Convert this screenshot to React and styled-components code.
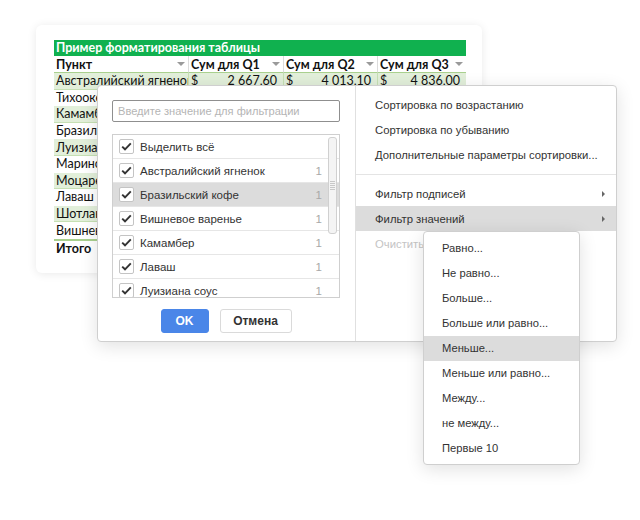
import React from 'react';
import styled, { createGlobalStyle } from 'styled-components';

const GlobalStyle = createGlobalStyle`
  html, body { margin: 0; padding: 0; background: #fff; }
  body { font-family: "Liberation Sans", Arial, sans-serif; }
`;

const Stage = styled.div`
  position: relative;
  width: 640px;
  height: 520px;
  overflow: hidden;
  background: #fff;
  padding-top: 25px;
  box-sizing: border-box;
`;

const SheetCard = styled.div`
  margin-left: 36px;
  width: 446px;
  height: 248px;
  box-sizing: border-box;
  padding: 15px 16px 0 18px;
  background: #fff;
  border-radius: 6px;
  box-shadow: 0 1px 10px rgba(0, 0, 0, 0.09);
`;

const Table = styled.div`
  display: grid;
  grid-template-columns: 134px 95px 94px 89px;
  width: 412px;
  font-family: Lato, "Liberation Sans", sans-serif;
  font-size: 12.5px;
  color: #111;
`;

const TitleCell = styled.div`
  grid-column: 1 / -1;
  height: 16px;
  line-height: 16px;
  padding-left: 2px;
  background: #10b14f;
  color: #fff;
  font-weight: 700;
`;

const HeadCell = styled.div`
  display: flex;
  align-items: center;
  justify-content: space-between;
  height: 16px;
  padding: 0 3px 0 2px;
  font-weight: 700;
  border-bottom: 1px solid #a9d08e;
  border-left: ${p => (p.$first ? 'none' : '1px solid #dcdcdc')};
  white-space: nowrap;
`;

const Arrow = styled.span`
  width: 0;
  height: 0;
  border-left: 4px solid transparent;
  border-right: 4px solid transparent;
  border-top: 4px solid #9a9a9a;
`;

const Cell = styled.div`
  display: flex;
  justify-content: space-between;
  align-items: center;
  height: ${p => (p.$total ? 18 : 16.6)}px;
  padding: 0 6px 0 2px;
  background: ${p => (p.$green ? '#e2efda' : '#fff')};
  border-bottom: 1px solid ${p => (p.$green ? '#c6e0b4' : '#fff')};
  border-left: ${p => (p.$first ? 'none' : '1px solid #c6e0b4')};
  border-top: ${p => (p.$total ? '2px solid #a9d08e' : 'none')};
  font-weight: ${p => (p.$total ? 700 : 400)};
  box-sizing: border-box;
  white-space: nowrap;
  overflow: hidden;
`;

const Dialog = styled.div`
  position: absolute;
  left: 97px;
  top: 85px;
  width: 520px;
  height: 257px;
  display: flex;
  background: #fff;
  border: 1px solid #cfcfcf;
  border-radius: 4px;
  box-shadow: 0 4px 18px rgba(0, 0, 0, 0.12);
  box-sizing: border-box;
  font-size: 11.3px;
  color: #333;
`;

const FilterPane = styled.div`
  flex: 0 0 258px;
  box-sizing: border-box;
  padding: 14px 15px 0 14px;
  border-right: 1px solid #e0e0e0;
  display: flex;
  flex-direction: column;
`;

const SearchInput = styled.input`
  height: 22px;
  box-sizing: border-box;
  border: 1px solid #8f8f8f;
  border-radius: 2px;
  padding: 0 5px;
  font-family: "Liberation Sans", Arial, sans-serif;
  font-size: 11.1px;
  color: #333;
  &::placeholder { color: #b5b5b5; }
`;

const ValueList = styled.div`
  position: relative;
  margin-top: 12px;
  height: 164px;
  border: 1px solid #cfcfcf;
  overflow: hidden;
  box-sizing: border-box;
`;

const ValueRow = styled.div`
  display: flex;
  align-items: center;
  height: 24px;
  box-sizing: border-box;
  padding: 0 17px 0 6px;
  border-bottom: 1px solid #e6e6e6;
  background: ${p => (p.$active ? '#dcdcdc' : '#fff')};
  font-size: 11.5px;
`;

const CheckBox = styled.span`
  display: flex;
  align-items: center;
  justify-content: center;
  width: 13px;
  height: 13px;
  border: 1px solid #c4c4c4;
  border-radius: 2px;
  background: #fff;
  margin-right: 6px;
`;

const Label = styled.span`
  flex: 1;
  white-space: nowrap;
`;

const Count = styled.span`
  color: #a8a8a8;
`;

const Scrollbar = styled.div`
  position: absolute;
  right: 2px;
  top: 2px;
  width: 7px;
  height: 95px;
  border: 1px solid #d0d0d0;
  border-radius: 3px;
  background: #f4f4f4;
  display: flex;
  align-items: center;
  justify-content: center;
`;

const Grip = styled.div`
  width: 5px;
  height: 9px;
  background: repeating-linear-gradient(#c8c8c8 0 1px, transparent 1px 2px);
`;

const ButtonRow = styled.div`
  display: flex;
  justify-content: center;
  gap: 11px;
  margin-top: 11px;
`;

const Button = styled.button`
  height: 24px;
  padding: 0;
  width: ${p => p.$w}px;
  border-radius: 3px;
  font-family: "Liberation Sans", Arial, sans-serif;
  font-size: 12px;
  font-weight: 700;
  border: 1px solid ${p => (p.$primary ? '#4a86e8' : '#dadada')};
  background: ${p => (p.$primary ? '#4a86e8' : '#fff')};
  color: ${p => (p.$primary ? '#fff' : '#333')};
`;

const MenuPane = styled.div`
  flex: 1;
  min-width: 0;
  padding-top: 6px;
`;

const MenuItem = styled.div`
  display: flex;
  align-items: center;
  justify-content: space-between;
  height: 25px;
  padding: 0 11px 0 19px;
  background: ${p => (p.$active ? '#dcdcdc' : 'transparent')};
  color: ${p => (p.$disabled ? '#c4c4c4' : '#333')};
  white-space: nowrap;
`;

const MenuSep = styled.div`
  height: 1px;
  background: #e4e4e4;
  margin: 7px 0 6px;
`;

const SubArrow = styled.span`
  width: 0;
  height: 0;
  border-top: 3px solid transparent;
  border-bottom: 3px solid transparent;
  border-left: 3px solid #666;
`;

const SubMenu = styled.div`
  position: absolute;
  left: 423px;
  top: 231px;
  width: 157px;
  height: 234px;
  box-sizing: border-box;
  padding-top: 4px;
  background: #fff;
  border: 1px solid #cfcfcf;
  border-radius: 4px;
  box-shadow: 0 4px 18px rgba(0, 0, 0, 0.12);
  font-size: 11.2px;
  color: #333;
`;

const SubItem = styled.div`
  height: 25px;
  line-height: 25px;
  padding-left: 18px;
  background: ${p => (p.$active ? '#dcdcdc' : 'transparent')};
  white-space: nowrap;
`;

const Check = () => (
  <svg width="11" height="9" viewBox="0 0 11 9">
    <polyline points="1.2,4.6 4,7.3 9.8,1.3" fill="none" stroke="#333" strokeWidth="1.9" />
  </svg>
);

const rows = [
  ['Австралийский ягненок', '2 667,60', '4 013,10', '4 836,00'],
  ['Тихоокеанский лосось', '1 768,41', '1 978,00', '4 412,32'],
  ['Камамбер', '3 182,40', '4 683,50', '9 579,50'],
  ['Бразильский кофе', '1 398,40', '4 496,50', '1 196,00'],
  ['Луизиана соус', '1 347,36', '2 750,69', '1 375,62'],
  ['Маринованная сельдь', '1 509,60', '530,40', '68,00'],
  ['Моцарелла', '1 390,00', '4 488,20', '3 027,60'],
  ['Лаваш', '1 462,00', '644,00', '1 733,00'],
  ['Шотландский хлеб', '1 310,40', '1 368,00', '1 323,00'],
  ['Вишневое варенье', '1 084,80', '1 575,00', '2 700,00'],
];

const values = [
  'Выделить всё',
  'Австралийский ягненок',
  'Бразильский кофе',
  'Вишневое варенье',
  'Камамбер',
  'Лаваш',
  'Луизиана соус',
];

const conditions = [
  'Равно...',
  'Не равно...',
  'Больше...',
  'Больше или равно...',
  'Меньше...',
  'Меньше или равно...',
  'Между...',
  'не между...',
  'Первые 10',
];

export default function App() {
  return (
    <Stage>
      <GlobalStyle />
      <SheetCard>
        <Table>
          <TitleCell>Пример форматирования таблицы</TitleCell>
          <HeadCell $first>Пункт<Arrow /></HeadCell>
          <HeadCell>Сум для Q1<Arrow /></HeadCell>
          <HeadCell>Сум для Q2<Arrow /></HeadCell>
          <HeadCell>Сум для Q3<Arrow /></HeadCell>
          {rows.map((r, i) => (
            <React.Fragment key={r[0]}>
              <Cell $first $green={i % 2 === 0}>{r[0]}</Cell>
              {r.slice(1).map((v, j) => (
                <Cell key={j} $green={i % 2 === 0}>
                  <span>$</span>
                  <span>{v}</span>
                </Cell>
              ))}
            </React.Fragment>
          ))}
          <Cell $first $total>Итого</Cell>
          <Cell $total><span>$</span><span>17 120,97</span></Cell>
          <Cell $total><span>$</span><span>26 527,39</span></Cell>
          <Cell $total><span>$</span><span>29 451,04</span></Cell>
        </Table>
      </SheetCard>

      <Dialog>
        <FilterPane>
          <SearchInput placeholder="Введите значение для фильтрации" />
          <ValueList>
            {values.map((v, i) => (
              <ValueRow key={v} $active={i === 2}>
                <CheckBox><Check /></CheckBox>
                <Label>{v}</Label>
                {i > 0 && <Count>1</Count>}
              </ValueRow>
            ))}
            <Scrollbar><Grip /></Scrollbar>
          </ValueList>
          <ButtonRow>
            <Button $primary $w={48}>OK</Button>
            <Button $w={72}>Отмена</Button>
          </ButtonRow>
        </FilterPane>
        <MenuPane>
          <MenuItem>Сортировка по возрастанию</MenuItem>
          <MenuItem>Сортировка по убыванию</MenuItem>
          <MenuItem>Дополнительные параметры сортировки...</MenuItem>
          <MenuSep />
          <MenuItem>Фильтр подписей<SubArrow /></MenuItem>
          <MenuItem $active>Фильтр значений<SubArrow /></MenuItem>
          <MenuItem $disabled>Очистить фильтр</MenuItem>
        </MenuPane>
      </Dialog>

      <SubMenu>
        {conditions.map((c, i) => (
          <SubItem key={c} $active={i === 4}>{c}</SubItem>
        ))}
      </SubMenu>
    </Stage>
  );
}
